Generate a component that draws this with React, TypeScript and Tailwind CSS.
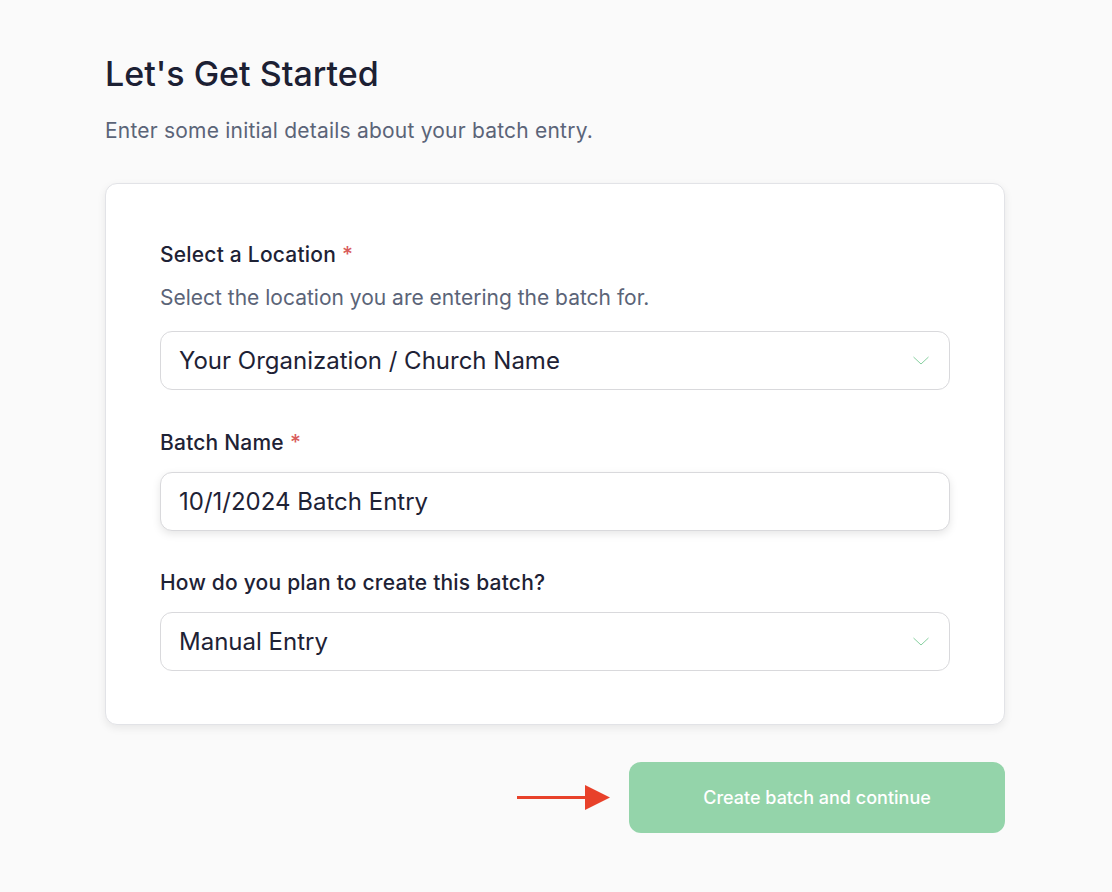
import React from "react"

const Chevron = () => (
  <svg width="16" height="9" viewBox="0 0 16 9" fill="none" className="shrink-0">
    <path d="M0.5 1 L8 8 L15.5 1" stroke="#86cf9f" strokeWidth="1" />
  </svg>
)

const Required = () => <span className="ml-1.5 text-[#d95c5c]">*</span>

const Label = ({ children, required }: { children: React.ReactNode; required?: boolean }) => (
  <div className="text-[21px] leading-[28px] font-medium tracking-[0.01em] text-[#1e2235]">
    {children}
    {required && <Required />}
  </div>
)

const SelectBox = ({ value }: { value: string }) => (
  <div className="flex h-[59px] items-center justify-between rounded-xl border border-[#d9d9dc] bg-white pl-[18px] pr-[20px]">
    <span className="text-[24px] text-[#1e2235]">{value}</span>
    <Chevron />
  </div>
)

export default function App() {
  return (
    <div
      className="min-h-screen bg-[#fafafa] pl-[105px] pr-[107px] pt-[50px]"
      style={{ fontFamily: "Inter, 'Noto Sans', sans-serif" }}
    >
      <h1 className="text-[34px] leading-[48px] font-medium text-[#1c2033]">Let's Get Started</h1>
      <p className="mt-[19px] text-[21px] leading-[28px] tracking-[0.01em] text-[#5b6478]">
        Enter some initial details about your batch entry.
      </p>

      <div className="mt-[38px] rounded-xl border border-[#e2e3e7] bg-white px-[54px] pt-[57px] pb-[53px] shadow-[0_3px_8px_rgba(0,0,0,0.08)]">
        <Label required>Select a Location</Label>
        <p className="mt-[15px] text-[21px] leading-[28px] text-[#5b6478]">
          Select the location you are entering the batch for.
        </p>
        <div className="mt-[19px]">
          <SelectBox value="Your Organization / Church Name" />
        </div>

        <div className="mt-[39px]">
          <Label required>Batch Name</Label>
        </div>
        <div className="mt-[15px] flex h-[59px] items-center rounded-xl border border-[#d9d9dc] bg-white pl-[18px] shadow-[0_3px_8px_rgba(0,0,0,0.1)]">
          <span className="text-[24px] text-[#1e2235]">10/1/2024 Batch Entry</span>
        </div>

        <div className="mt-[38px]">
          <Label>How do you plan to create this batch?</Label>
        </div>
        <div className="mt-[15px]">
          <SelectBox value="Manual Entry" />
        </div>
      </div>

      <div className="mt-[37px] flex items-center justify-end gap-[18px]">
        <svg width="94" height="25" viewBox="0 0 94 25">
          <rect x="0" y="11" width="70" height="3" fill="#e8412a" />
          <path d="M68 0 L93 12.5 L68 25 Z" fill="#e8412a" />
        </svg>
        <button className="h-[71px] w-[376px] rounded-xl bg-[#94d4aa] text-[18px] font-medium text-white">
          Create batch and continue
        </button>
      </div>
    </div>
  )
}
